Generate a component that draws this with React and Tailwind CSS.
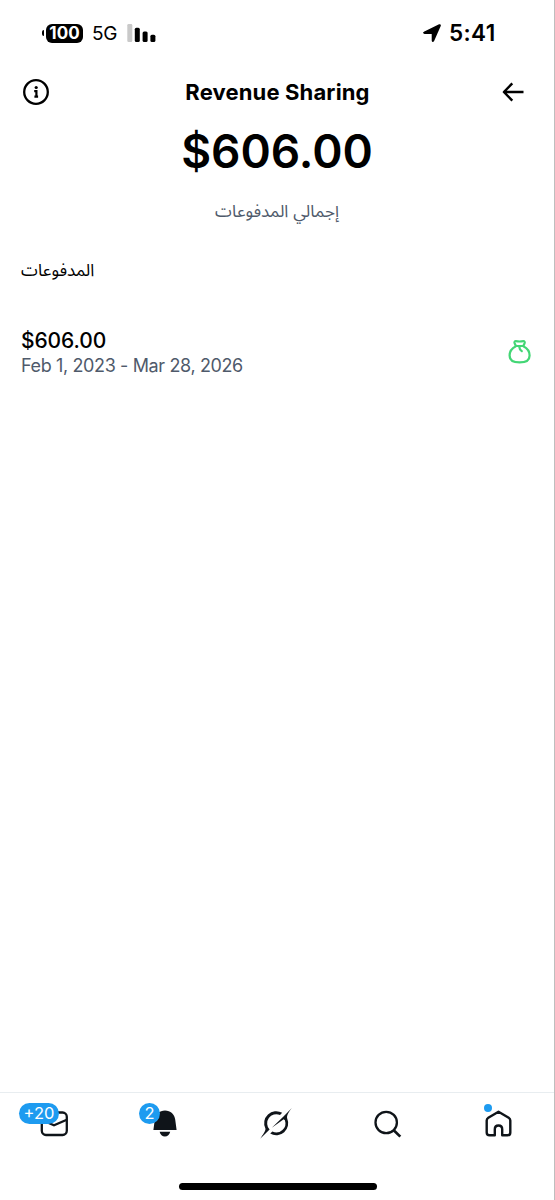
import React, { useState } from 'react';

const payouts = [
  { id: 1, amount: '$606.00', period: 'Feb 1, 2023 - Mar 28, 2026' },
];

function StatusBar() {
  return (
    <div className="flex h-[66px] items-center justify-between pl-[42px] pr-[57px]">
      <div className="flex items-center">
        <div className="h-[6px] w-[2px] rounded-l-full bg-black" />
        <div className="ml-[2px] flex h-[19px] w-[37px] items-center justify-center rounded-[6px] bg-black text-[17px] font-bold leading-none text-white">
          100
        </div>
        <span className="ml-[9px] w-[26px] whitespace-nowrap pt-px text-[19px] leading-none tracking-[-0.3px]">5G</span>
        <svg className="ml-[9px]" width="30" height="18" viewBox="0 0 30 18">
          <rect x="0.3" y="0" width="5" height="18" rx="1.3" fill="#c9c9c9" />
          <rect x="7.8" y="3.7" width="5" height="14.3" rx="1.5" />
          <rect x="15.6" y="7.4" width="5" height="10.6" rx="1.5" />
          <rect x="23.4" y="10.7" width="5" height="7.3" rx="1.5" />
        </svg>
      </div>
      <div className="flex items-center">
        <svg width="18" height="18" viewBox="0 0 18 18">
          <path
            d="M1.2 8.4 16.400 1c.5-.2.8.1.6.6L10.400 16.800c-.2.5-.9.4-.9-.2V9.600c0-.3-.2-.5-.5-.5H1.400c-.5 0-.7-.5-.2-.7z"
            stroke="#000"
            strokeWidth="1.6"
            strokeLinejoin="round"
          />
        </svg>
        <span className="ml-[8px] w-[48px] whitespace-nowrap pt-px text-[22.5px] font-[560] leading-none tracking-[0.4px]">5:41</span>
      </div>
    </div>
  );
}

function Header() {
  return (
    <div className="flex h-[52px] items-center justify-between pl-[23px] pr-[30px]">
      <button aria-label="Info">
        <svg width="26" height="26" viewBox="0 0 26 26" fill="none" stroke="#000">
          <circle cx="13" cy="13" r="11.8" strokeWidth="2.3" />
          <circle cx="13.2" cy="8.5" r="1.6" fill="#000" stroke="none" />
          <path d="M11.2 12.2h2.2v5.3M11.4 17.6h3.7" strokeWidth="2.2" />
        </svg>
      </button>
      <h1 className="pl-[4px] text-[22px] font-[650] tracking-[0.15px]">Revenue Sharing</h1>
      <button aria-label="Back">
        <svg width="22" height="20" viewBox="0 0 22 20" fill="none" stroke="#000" strokeWidth="2.4" strokeLinejoin="round">
          <path d="M21.5 10H2.2M10.3 1.4 1.9 10l8.4 8.6" />
        </svg>
      </button>
    </div>
  );
}

function MoneyBag() {
  return (
    <svg width="24" height="26" viewBox="0 0 24 26" fill="none" stroke="#43d675" strokeWidth="2.2" strokeLinejoin="round">
      <path d="M7.9 6.3C3.8 8.400 1.600 12 1.600 15.400c0 4.700 3.400 7 10 7s10-2.300 10-7c0-3.400-2.200-7-6.300-9.100" />
      <path d="M7.900 6 6.600 3.200c-.5-1.200.1-2 1.200-2 1.600 0 2.300.3 3.800.3s2.200-.3 3.800-.3c1.100 0 1.700.8 1.200 2L15.300 6z" />
      <path d="M11.200 6.400c.1 2.200.9 3.600 2.600 4.800" strokeLinecap="round" />
    </svg>
  );
}

function Badge({ children }) {
  return (
    <span className="flex h-[21px] items-center justify-center rounded-full bg-[#1d9bf0] text-[16.5px] leading-none text-white">
      {children}
    </span>
  );
}

function MailIcon() {
  return (
    <svg width="28" height="26" viewBox="0 0 28 26" fill="none" stroke="#0f1419" strokeWidth="2.3">
      <rect x="1.8" y="1.5" width="25" height="22.5" rx="4.2" />
      <path d="M1.8 9 14 14.3 26.8 8.8" />
    </svg>
  );
}

function BellIcon() {
  return (
    <svg width="24" height="27" viewBox="0 0 24 27" fill="#0f1419">
      <path d="M12 .5C6.5.5 2.3 4.4 1.8 9.5L.4 20h23.2L22.2 9.5C21.7 4.4 17.5.5 12 .5z" />
      <path d="M6.6 21.7h10.6c-.7 3-2.700 4.700-5.300 4.700s-4.600-1.700-5.300-4.700z" />
    </svg>
  );
}

function GrokIcon() {
  return (
    <svg width="34" height="33" viewBox="0 0 34 33" fill="#0f1419">
      <path d="M23.2 5.8A12 12 0 0 0 6.4 21.5C7 23.5 4 27.5 1.2 31.7L10.6 22.6A9.2 9.2 0 0 1 21 7.9Z" />
      <path d="M32.8 1C29.5 5.5 27.5 8.5 28.2 11.4A12 12 0 0 1 11.2 26.600L13.4 24.600A9.2 9.2 0 0 0 25.9 13.2L24.700 12.200 12.800 20.800 24.500 9.500Z" />
    </svg>
  );
}

function SearchIcon() {
  return (
    <svg width="28" height="28" viewBox="0 0 28 28" fill="none" stroke="#0f1419" strokeWidth="2.3">
      <circle cx="12.2" cy="12.5" r="10.7" />
      <path d="m19.7 20.2 6.6 6.4" strokeWidth="2.7" />
    </svg>
  );
}

function HomeIcon() {
  return (
    <svg width="27" height="27" viewBox="0 0 27 27" fill="none" stroke="#0f1419" strokeWidth="2.4" strokeLinejoin="round">
      <path d="M13.5 1.7 3.300 7.800C2.200 8.500 1.700 9.200 1.700 10.600v11.800c0 1.900 1 2.900 2.900 2.900h5.200v-6.100c0-2.200 1.500-3.700 3.700-3.700s3.700 1.500 3.700 3.700v6.100h5.200c1.900 0 2.900-1 2.900-2.900V10.600c0-1.400-.5-2.100-1.600-2.800z" />
    </svg>
  );
}

function BottomNav() {
  const [active, setActive] = useState('home');

  return (
    <nav className="h-[108px] border-t border-[#e8edf0]">
      <div className="flex h-[61px] items-center pl-[40px]">
        <button className="relative" aria-label="Messages" onClick={() => setActive('messages')}>
          <MailIcon />
          <div className="absolute left-[-21px] top-[-8px] w-[40px]"><Badge>+20</Badge></div>
        </button>
        <button className="relative ml-[85px]" aria-label="Notifications" onClick={() => setActive('notifications')}>
          <BellIcon />
          <div className="absolute left-[-14px] top-[-7px] w-[21px]"><Badge>2</Badge></div>
        </button>
        <button className="ml-[82px]" aria-label="Grok" onClick={() => setActive('grok')}><GrokIcon /></button>
        <button className="ml-[81px]" aria-label="Search" onClick={() => setActive('search')}><SearchIcon /></button>
        <button className="relative ml-[83px]" aria-label="Home" aria-current={active === 'home'} onClick={() => setActive('home')}>
          <HomeIcon />
          <span className="absolute left-[-1px] top-[-6px] size-[8px] rounded-full bg-[#1d9bf0]" />
        </button>
      </div>
      <div className="ml-[179px] mt-[29px] h-[7px] w-[198px] rounded-full bg-black" />
    </nav>
  );
}

function App() {
  return (
    <div className="flex h-[1200px] w-[555px] flex-col border-r border-[#bebebe] bg-white font-['Inter','Noto_Sans_Arabic','DejaVu_Sans',sans-serif] text-black">
      <StatusBar />
      <Header />
      <main className="flex-1">
        <div className="flex flex-col items-center">
          <div className="h-[66px] text-[46px] font-semibold leading-[66px]">$606.00</div>
          <p dir="rtl" className="mt-[14px] text-[17px] leading-[27px] text-[#4f5a6b]">إجمالي المدفوعات</p>
        </div>
        <div className="pl-[21px] pr-[22px]">
          <h2 dir="rtl" className="mt-[30px] w-fit text-[17px] leading-[30px]">المدفوعات</h2>
          {payouts.map((payout) => (
            <div key={payout.id} className="mt-[44px] flex items-start justify-between">
              <div>
                <div className="text-[21px] font-medium leading-[24px] tracking-[-0.1px]">{payout.amount}</div>
                <div className="text-[18px] leading-[25px] tracking-[-0.37px] text-[#4f5a6b]">{payout.period}</div>
              </div>
              <div className="pt-[11px]">
                <MoneyBag />
              </div>
            </div>
          ))}
        </div>
      </main>
      <BottomNav />
    </div>
  );
}

export default App;
